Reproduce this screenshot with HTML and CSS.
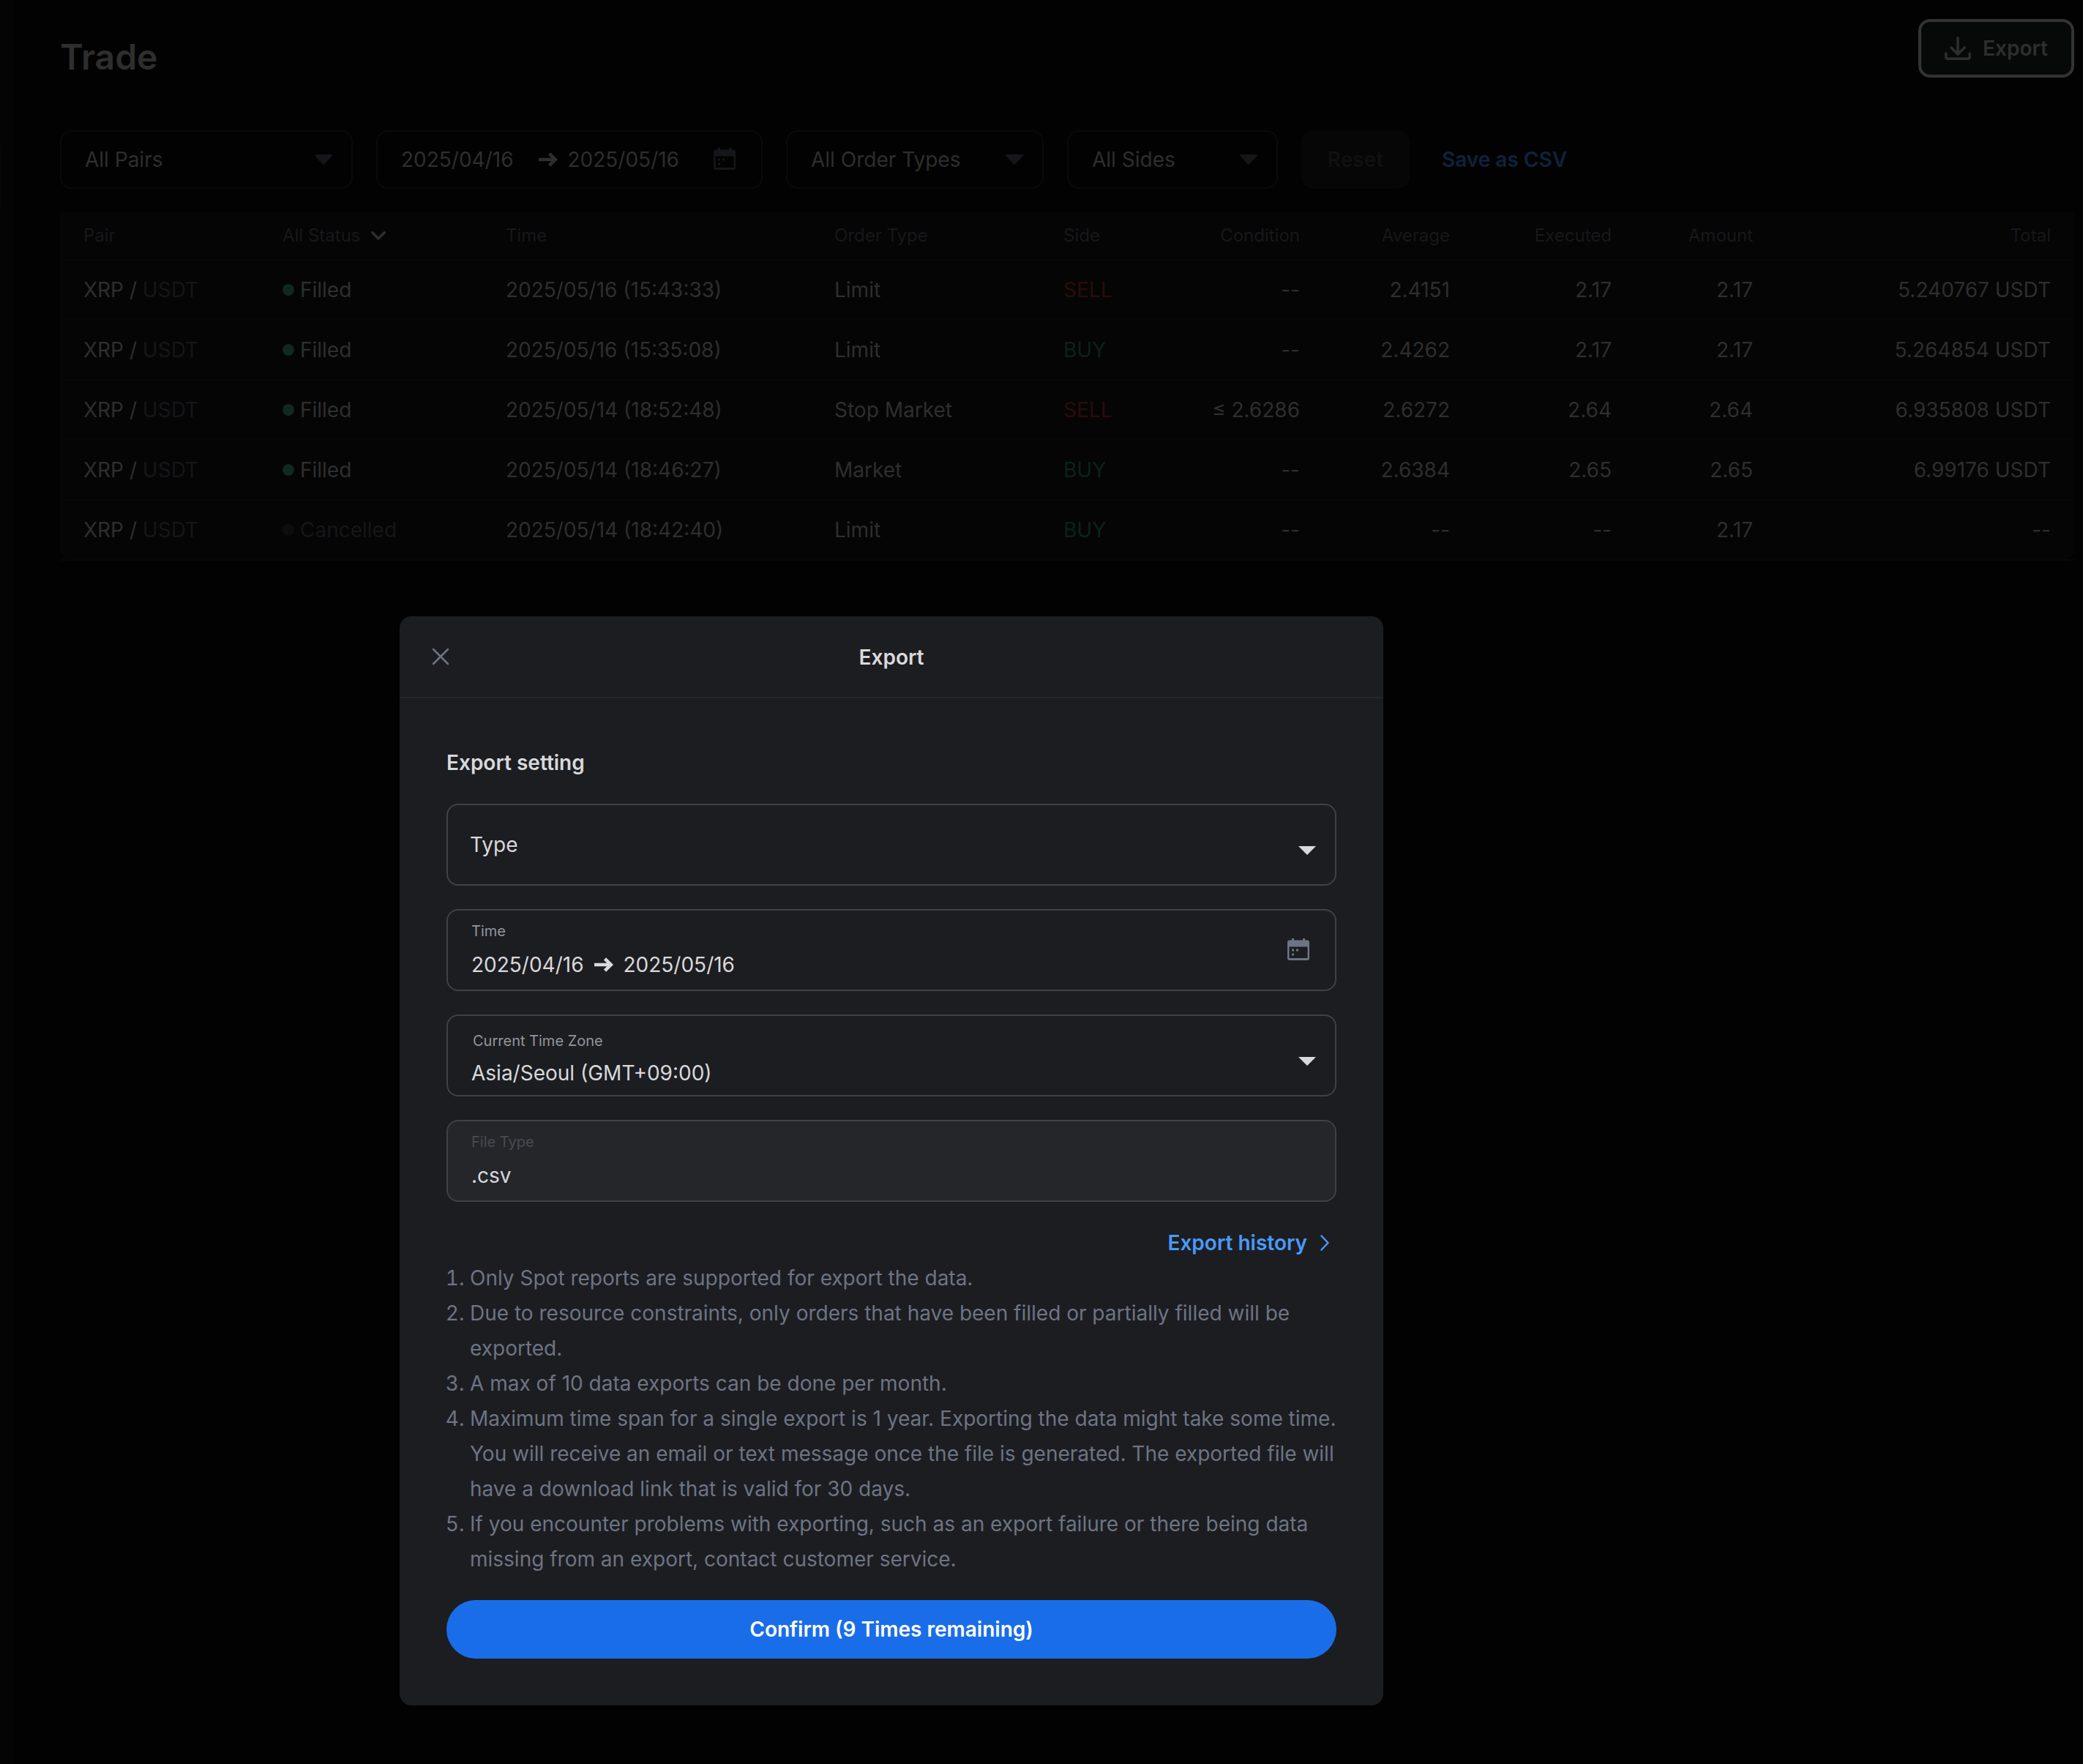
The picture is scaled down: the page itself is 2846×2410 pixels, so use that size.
FILE: index.html
```html
<!DOCTYPE html>
<html lang="en">
<head>
<meta charset="utf-8">
<title>Trade</title>
<link rel="stylesheet" href="styles.css">
</head>
<body>
<svg class="sprite" aria-hidden="true">
  <symbol id="caret" viewBox="0 0 24 14"><path d="M1 0h22q1.500 1 .5 2.200L13.200 13.200q-1.200 1.200-2.400 0L.5 2.200Q-.5 1 1 0z"/></symbol>
  <symbol id="caret-sharp" viewBox="0 0 24 12"><path d="M0 0h24L12 12z"/></symbol>
  <symbol id="calendar" viewBox="0 1 32 32">
    <path fill-rule="evenodd" d="M7 1h3v2.500h12V1h3v2.500h3a3 3 0 0 1 3 3V28a3 3 0 0 1-3 3H4a3 3 0 0 1-3-3V6.500a3 3 0 0 1 3-3h3zM3.500 12.500V28h25V12.500z"/>
    <path d="M7 15.500h3v3H7zm6 0h3v3h-3zm-6 6h3v3H7z"/>
  </symbol>
  <symbol id="arrow" viewBox="0 0 26 20"><path d="M0 10h22M14.500 1.800 22.800 10l-8.300 8.200" fill="none" stroke="currentColor" stroke-width="4.600"/></symbol>
</svg>

<div class="layout">
  <aside class="sidebar"></aside>
  <main class="page">
    <header class="page-head">
      <h1 class="page-title">Trade</h1>
      <button class="export-btn" type="button">
        <svg width="36" height="32" viewBox="0 0 36 32" fill="none" stroke="currentColor" stroke-width="3.500" stroke-linecap="round" stroke-linejoin="round"><path d="M18 1.800v22M9 15l9 9 9-9M1.800 23v5a2.500 2.500 0 0 0 2.500 2.300h27.400a2.500 2.500 0 0 0 2.500-2.300v-5"/></svg>
        Export
      </button>
    </header>

    <form class="filters">
      <div class="filter filter-pairs">
        <select class="filter-select" aria-label="Pairs"><option>All Pairs</option></select>
        <svg class="filter-caret"><use href="#caret"/></svg>
      </div>
      <button class="filter filter-dates" type="button" aria-label="Date range">
        <span>2025/04/16</span>
        <svg class="arrow"><use href="#arrow"/></svg>
        <span>2025/05/16</span>
        <svg class="calendar"><use href="#calendar"/></svg>
      </button>
      <div class="filter filter-types">
        <select class="filter-select" aria-label="Order type"><option>All Order Types</option></select>
        <svg class="filter-caret"><use href="#caret"/></svg>
      </div>
      <div class="filter filter-sides">
        <select class="filter-select" aria-label="Side"><option>All Sides</option></select>
        <svg class="filter-caret"><use href="#caret"/></svg>
      </div>
      <button class="reset-btn" type="reset">Reset</button>
      <a class="csv-link" href="#">Save as CSV</a>
    </form>

    <table class="orders">
      <colgroup>
        <col class="c-pair"><col class="c-status"><col class="c-time"><col class="c-type"><col class="c-side"><col class="c-cond"><col class="c-avg"><col class="c-exec"><col class="c-amount"><col class="c-total">
      </colgroup>
      <thead>
        <tr>
          <th>Pair</th>
          <th><button class="status-btn" type="button">All Status <svg width="20" height="12" viewBox="0 0 20 12" fill="none" stroke="currentColor" stroke-width="3.500" stroke-linecap="round" stroke-linejoin="round"><path d="M1.800 1.800 10 10l8.200-8.200"/></svg></button></th>
          <th>Time</th><th>Order Type</th><th>Side</th>
          <th class="num">Condition</th><th class="num">Average</th><th class="num">Executed</th><th class="num">Amount</th><th class="num">Total</th>
        </tr>
      </thead>
      <tbody>
        <tr><td>XRP / <span class="quote">USDT</span></td><td><span class="status">Filled</span></td><td>2025/05/16 (15:43:33)</td><td>Limit</td><td class="sell">SELL</td><td class="num">--</td><td class="num">2.4151</td><td class="num">2.17</td><td class="num">2.17</td><td class="num">5.240767 USDT</td></tr>
        <tr><td>XRP / <span class="quote">USDT</span></td><td><span class="status">Filled</span></td><td>2025/05/16 (15:35:08)</td><td>Limit</td><td class="buy">BUY</td><td class="num">--</td><td class="num">2.4262</td><td class="num">2.17</td><td class="num">2.17</td><td class="num">5.264854 USDT</td></tr>
        <tr><td>XRP / <span class="quote">USDT</span></td><td><span class="status">Filled</span></td><td>2025/05/14 (18:52:48)</td><td>Stop Market</td><td class="sell">SELL</td><td class="num">≤ 2.6286</td><td class="num">2.6272</td><td class="num">2.64</td><td class="num">2.64</td><td class="num">6.935808 USDT</td></tr>
        <tr><td>XRP / <span class="quote">USDT</span></td><td><span class="status">Filled</span></td><td>2025/05/14 (18:46:27)</td><td>Market</td><td class="buy">BUY</td><td class="num">--</td><td class="num">2.6384</td><td class="num">2.65</td><td class="num">2.65</td><td class="num">6.99176 USDT</td></tr>
        <tr><td>XRP / <span class="quote">USDT</span></td><td><span class="status status-off">Cancelled</span></td><td>2025/05/14 (18:42:40)</td><td>Limit</td><td class="buy">BUY</td><td class="num">--</td><td class="num">--</td><td class="num">--</td><td class="num">2.17</td><td class="num">--</td></tr>
      </tbody>
    </table>
  </main>
</div>

<div class="overlay">
  <section class="modal" role="dialog" aria-modal="true" aria-labelledby="modal-title">
    <header class="modal-head">
      <button class="close-btn" type="button" aria-label="Close"><svg width="24" height="24" viewBox="0 0 24 24" fill="none" stroke="currentColor" stroke-width="2.500" stroke-linecap="round"><path d="M2 2l20 20M22 2 2 22"/></svg></button>
      <h2 class="modal-title" id="modal-title">Export</h2>
    </header>
    <form class="modal-body">
      <div class="fields">
        <h3 class="section-title">Export setting</h3>
        <div class="field">
          <select class="type-select" aria-label="Type"><option>Type</option></select>
          <svg class="field-caret"><use href="#caret-sharp"/></svg>
        </div>
        <div class="field field-stacked">
          <label class="field-label" for="range">Time</label>
          <button class="range-btn" id="range" type="button">
            <span>2025/04/16</span>
            <svg class="arrow"><use href="#arrow"/></svg>
            <span>2025/05/16</span>
          </button>
          <svg class="calendar field-calendar"><use href="#calendar"/></svg>
        </div>
        <div class="field field-stacked field-zone">
          <label class="field-label" for="zone">Current Time Zone</label>
          <select class="field-value" id="zone"><option>Asia/Seoul (GMT+09:00)</option></select>
          <svg class="field-caret"><use href="#caret-sharp"/></svg>
        </div>
        <div class="field field-stacked field-locked">
          <label class="field-label" for="filetype">File Type</label>
          <input class="field-value" id="filetype" type="text" value=".csv" readonly>
        </div>
      </div>
      <div class="notes">
        <a class="history-link" href="#">Export history <svg width="12" height="22" viewBox="0 0 12 22" fill="none" stroke="currentColor" stroke-width="2.500" stroke-linecap="round" stroke-linejoin="round"><path d="M1.500 1.500 10.500 11l-9 9.500"/></svg></a>
        <ol class="note-list">
          <li>Only Spot reports are supported for export the data.</li>
          <li>Due to resource constraints, only orders that have been filled or partially filled will be exported.</li>
          <li>A max of 10 data exports can be done per month.</li>
          <li>Maximum time span for a single export is 1 year. Exporting the data might take some time. You will receive an email or text message once the file is generated. The exported file will have a download link that is valid for 30 days.</li>
          <li>If you encounter problems with exporting, such as an export failure or there being data missing from an export, contact customer service.</li>
        </ol>
      </div>
      <button class="confirm-btn" type="button">Confirm (9 Times remaining)</button>
    </form>
  </section>
</div>
</body>
</html>
```
FILE: styles.css
```css
* { box-sizing: border-box; }

body {
  margin: 0;
  background: #020202;
  color: #2e2e2e;
  font: 400 28px/36px Inter, sans-serif;
}

h1, h2, h3 { margin: 0; font-weight: 600; }

button, select, input {
  margin: 0;
  padding: 0;
  border: 0;
  background: none;
  color: inherit;
  font: inherit;
  appearance: none;
  outline: 0;
}

a { text-decoration: none; }
svg { flex: none; display: block; }
.sprite { position: absolute; width: 0; height: 0; }

/* Dimmed page behind the dialog */
.layout { display: flex; min-height: 100vh; }
.sidebar { width: 18px; padding-top: 198px; background: #040404; }
.sidebar::before {
  content: "";
  display: block;
  width: 2px;
  height: 88px;
  background: #070708;
}
.page { flex: 1; min-width: 0; padding: 26px 12px 0 64px; }

.page-head {
  display: flex;
  justify-content: space-between;
  align-items: flex-end;
  margin-bottom: 72px;
}
.page-title { font-size: 48px; line-height: 56px; }

.export-btn {
  display: flex;
  align-items: center;
  gap: 16px;
  height: 80px;
  padding: 0 32px;
  border: 4px solid #333333;
  border-radius: 16px;
  background: #070909;
  font-weight: 600;
}

.filters { display: flex; gap: 32px; margin-bottom: 32px; }
.filter {
  position: relative;
  height: 80px;
  border: 2px solid #0a0a0b;
  border-radius: 16px;
}
.filter-pairs { width: 400px; }
.filter-dates { display: flex; align-items: center; width: 528px; padding: 0 34px 0 32px; }
.filter-dates .arrow { margin: 0 14px 0 34px; }
.filter-dates .calendar { margin-left: auto; }
.filter-types { width: 352px; }
.filter-sides { width: 288px; }
.filter-select { width: 100%; height: 100%; padding: 0 32px; }
.filter-caret {
  position: absolute;
  top: 31px;
  right: 26px;
  width: 24px;
  height: 14px;
  fill: #151619;
  pointer-events: none;
}
.arrow { width: 26px; height: 20px; }
.calendar { width: 32px; height: 32px; fill: #151619; }

.reset-btn {
  width: 148px;
  height: 80px;
  border-radius: 16px;
  background: #060607;
  color: #101011;
  font-weight: 600;
}
.csv-link { margin-left: 12px; color: #0f223c; font-weight: 600; line-height: 80px; }

.orders {
  width: 100%;
  table-layout: fixed;
  border-collapse: separate;
  border-spacing: 0;
  border-radius: 0 0 16px 16px;
  background: #050505;
}
.c-pair { width: 272px; }
.c-status { width: 305px; }
.c-time { width: 449px; }
.c-type { width: 313px; }
.c-side { width: 127px; }
.c-cond { width: 260px; }
.c-avg { width: 205px; }
.c-exec { width: 221px; }
.c-amount { width: 193px; }
.c-total { width: 407px; }
.orders th, .orders td {
  padding: 0 32px;
  border-bottom: 2px solid #070708;
  text-align: left;
  white-space: nowrap;
}
.orders th { height: 66px; color: #16181b; font-size: 24px; font-weight: 400; }
.orders td { height: 82px; }
.orders .num { text-align: right; }
.orders .sell { color: #2c0c0a; }
.orders .buy { color: #0b2219; }
.orders .quote { color: #151619; }
.status-btn { display: flex; align-items: center; gap: 14px; }
.status-btn svg { color: #2e2e2e; }
.status { display: flex; align-items: center; gap: 8px; }
.status::before {
  content: "";
  width: 16px;
  height: 16px;
  border-radius: 50%;
  background: #11281f;
}
.status-off { color: #151619; }
.status-off::before { background: #0c0d0f; }

/* Export dialog */
.overlay {
  position: absolute;
  inset: 0;
  display: flex;
  justify-content: center;
  align-items: flex-start;
  padding: 842px 410px 0 0;
}
.modal {
  width: 1344px;
  border-radius: 16px;
  background: #1c1d21;
  color: #d8d9db;
}
.modal-head {
  position: relative;
  display: grid;
  place-items: center;
  height: 112px;
  padding-top: 2px;
  border-bottom: 2px solid #25262a;
}
.modal-title { font-size: 28px; line-height: 36px; }
.close-btn { position: absolute; left: 44px; color: #6d7483; }
.modal-body { display: flex; flex-direction: column; gap: 32px; padding: 64px; }
.fields { display: flex; flex-direction: column; gap: 32px; }
.section-title { font-size: 28px; line-height: 48px; }

.field {
  position: relative;
  height: 112px;
  border: 2px solid #404145;
  border-radius: 16px;
}
.field-stacked {
  display: flex;
  flex-direction: column;
  align-items: flex-start;
  gap: 16px;
  padding: 16px 32px 0;
}
.field-zone { gap: 14px; padding-top: 22px; }
.field-locked { background: #25262a; }
.field-label { color: #92959c; font-size: 20px; line-height: 24px; }
.field-zone .field-label { padding-left: 2px; }
.field-locked .field-label { color: #494a53; }
.field-value { width: 100%; height: 36px; }
.type-select { width: 100%; height: 100%; padding: 0 30px; }
.range-btn { display: flex; align-items: center; gap: 14px; height: 36px; }
.field-caret {
  position: absolute;
  top: 56px;
  right: 26px;
  width: 24px;
  height: 12px;
  fill: #d8d9db;
  pointer-events: none;
}
.field-calendar { position: absolute; top: 38px; right: 34px; fill: #6d7483; }

.notes { display: flex; flex-direction: column; line-height: 48px; }
.history-link {
  display: flex;
  align-items: center;
  align-self: flex-end;
  gap: 18px;
  padding-right: 10px;
  color: #4a99f8;
  font-weight: 600;
}
.note-list { margin: 0; padding-left: 32px; color: #6d7483; }
.confirm-btn {
  height: 80px;
  border-radius: 40px;
  background: #1a6de8;
  color: #ffffff;
  font-weight: 600;
}
```
